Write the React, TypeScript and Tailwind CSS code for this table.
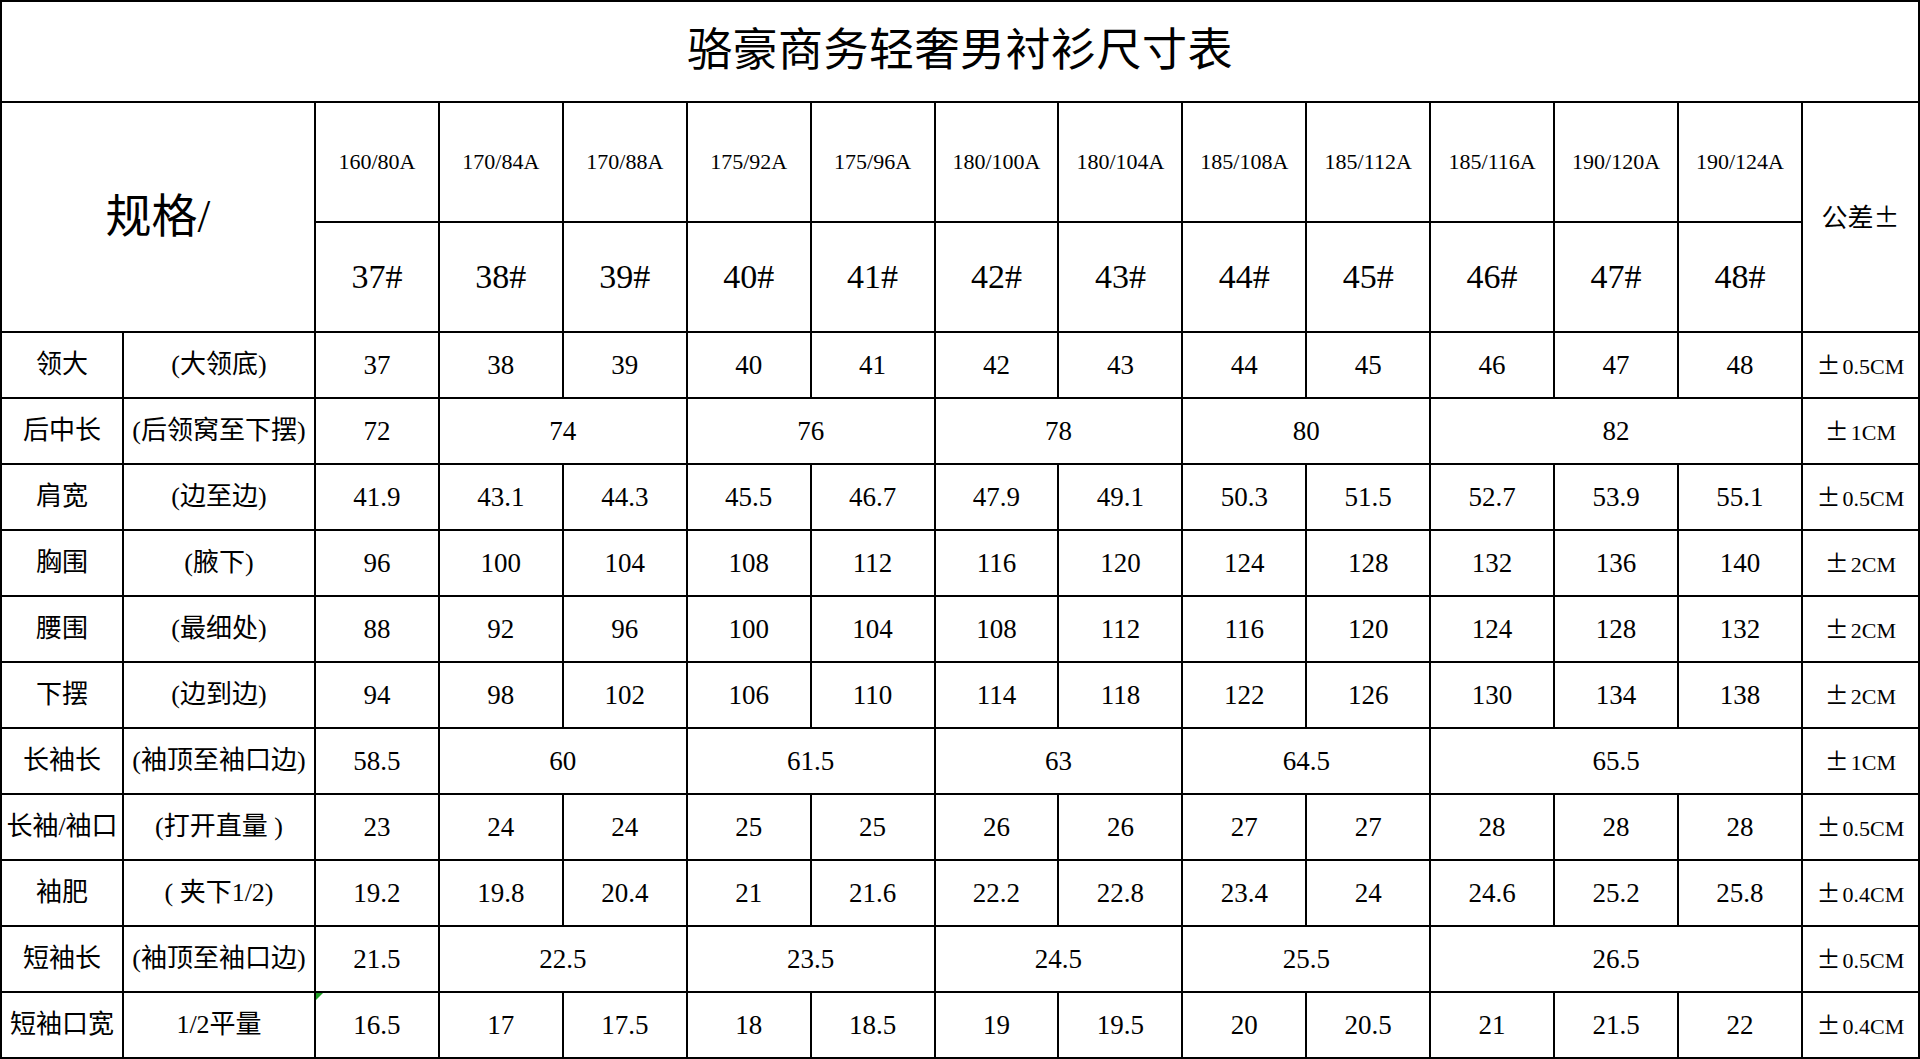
import React from "react";

type Cell = [string, number];

interface Row {
  name: string;
  desc: string;
  vals: Cell[];
  tol: string;
}

const sizes = [
  "160/80A", "170/84A", "170/88A", "175/92A", "175/96A", "180/100A",
  "180/104A", "185/108A", "185/112A", "185/116A", "190/120A", "190/124A",
];

const one = (s: string) => s.split(" ").map((v) => [v, 1] as Cell);

const rows: Row[] = [
  { name: "领大", desc: "(大领底)", vals: one("37 38 39 40 41 42 43 44 45 46 47 48"), tol: "0.5CM" },
  { name: "后中长", desc: "(后领窝至下摆)", vals: [["72", 1], ["74", 2], ["76", 2], ["78", 2], ["80", 2], ["82", 3]], tol: "1CM" },
  { name: "肩宽", desc: "(边至边)", vals: one("41.9 43.1 44.3 45.5 46.7 47.9 49.1 50.3 51.5 52.7 53.9 55.1"), tol: "0.5CM" },
  { name: "胸围", desc: "(腋下)", vals: one("96 100 104 108 112 116 120 124 128 132 136 140"), tol: "2CM" },
  { name: "腰围", desc: "(最细处)", vals: one("88 92 96 100 104 108 112 116 120 124 128 132"), tol: "2CM" },
  { name: "下摆", desc: "(边到边)", vals: one("94 98 102 106 110 114 118 122 126 130 134 138"), tol: "2CM" },
  { name: "长袖长", desc: "(袖顶至袖口边)", vals: [["58.5", 1], ["60", 2], ["61.5", 2], ["63", 2], ["64.5", 2], ["65.5", 3]], tol: "1CM" },
  { name: "长袖/袖口", desc: "(打开直量 )", vals: one("23 24 24 25 25 26 26 27 27 28 28 28"), tol: "0.5CM" },
  { name: "袖肥", desc: "( 夹下1/2)", vals: one("19.2 19.8 20.4 21 21.6 22.2 22.8 23.4 24 24.6 25.2 25.8"), tol: "0.4CM" },
  { name: "短袖长", desc: "(袖顶至袖口边)", vals: [["21.5", 1], ["22.5", 2], ["23.5", 2], ["24.5", 2], ["25.5", 2], ["26.5", 3]], tol: "0.5CM" },
  { name: "短袖口宽", desc: "1/2平量", vals: one("16.5 17 17.5 18 18.5 19 19.5 20 20.5 21 21.5 22"), tol: "0.4CM" },
];

const td = "border-r-2 border-b-2 border-black text-center align-middle p-0 leading-none";
// 正负号用中文字体，字形更大
const pm = "font-['Noto_Sans_CJK_SC',sans-serif]";

export default function App() {
  return (
    <div className="w-[1920px] h-[1059px] bg-white text-black border-l-2 border-t-2 border-black font-['Liberation_Serif','Noto_Sans_CJK_SC',serif] overflow-hidden">
      <table className="w-full table-fixed border-separate border-spacing-0">
        <colgroup>
          <col className="w-[122px]" />
          <col className="w-[192px]" />
          {sizes.map((s) => (
            <col key={s} />
          ))}
          <col className="w-[117px]" />
        </colgroup>
        <tbody>
          {/* 标题 */}
          <tr className="h-[101px]">
            <td colSpan={15} className={`${td} text-[45px] tracking-[0.5px]`}>
              骆豪商务轻奢男衬衫尺寸表
            </td>
          </tr>

          {/* 表头 */}
          <tr className="h-[120px]">
            <td colSpan={2} rowSpan={2} className={`${td} text-[46px]`}>
              规格/
            </td>
            {sizes.map((s) => (
              <td key={s} className={`${td} text-[22px]`}>
                {s}
              </td>
            ))}
            <td rowSpan={2} className={`${td} text-[26px]`}>
              公差<span className={pm}>±</span>
            </td>
          </tr>
          <tr className="h-[110px]">
            {sizes.map((_, i) => (
              <td key={i} className={`${td} text-[34px]`}>
                {37 + i}#
              </td>
            ))}
          </tr>

          {/* 数据 */}
          {rows.map((r, ri) => (
            <tr key={r.name} className="h-[66px]">
              <td className={`${td} text-[26px] whitespace-nowrap`}>{r.name}</td>
              <td className={`${td} text-[26px] whitespace-nowrap`}>{r.desc}</td>
              {r.vals.map(([v, span], i) => (
                <td key={i} colSpan={span} className={`${td} text-[27px] relative`}>
                  {ri === rows.length - 1 && i === 0 && (
                    <span className="absolute left-0 top-0 w-[7px] h-[7px] bg-[#1e9e25] [clip-path:polygon(0_0,100%_0,0_100%)]" />
                  )}
                  {v}
                </td>
              ))}
              <td className={`${td} text-[22px] whitespace-nowrap`}>
                <span className={`${pm} text-[24px] mr-[2px]`}>±</span>{r.tol}
              </td>
            </tr>
          ))}
        </tbody>
      </table>
    </div>
  );
}
